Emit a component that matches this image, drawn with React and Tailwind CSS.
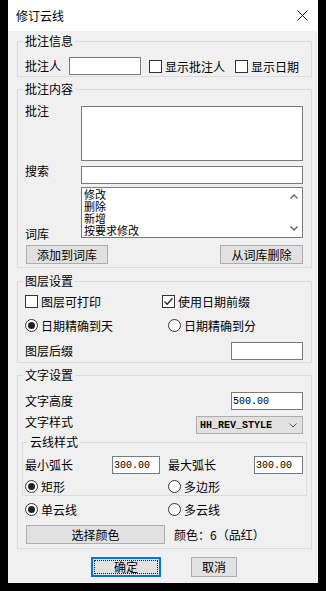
import React from 'react';

const cjk = "font-['Noto_Sans_CJK_SC','Noto_Sans_CJK_JP',sans-serif]";

function Group({ title, className = '', children }) {
    return (
        <fieldset className={`border border-[#dcdcdc] ${className}`}>
            <legend className="ml-[5px] px-[2px] text-[12px] leading-[16px]">{title}</legend>
            {children}
        </fieldset>
    );
}

function Input({ className = '', value }) {
    return (
        <div className={`bg-white border border-[#7a7a7a] h-[18px] pl-[1px] flex items-center font-['Liberation_Mono',monospace] text-[10px] ${className}`}>
            {value}
        </div>
    );
}

function Check({ checked, label }) {
    return (
        <div className="flex items-center h-[13px]">
            <div className="w-[13px] h-[13px] border border-[#333] bg-white flex items-center justify-center">
                {checked && (
                    <svg width="11" height="11" viewBox="0 0 11 11">
                        <path d="M1.5 5.5 L4.2 8.2 L9.5 2.2" fill="none" stroke="#222" strokeWidth="1.3" />
                    </svg>
                )}
            </div>
            <span className="ml-[3px] text-[12px] leading-[13px]">{label}</span>
        </div>
    );
}

function Radio({ checked, label }) {
    return (
        <div className="flex items-center h-[13px]">
            <div className="w-[13px] h-[13px] rounded-full border border-[#333] bg-white flex items-center justify-center">
                {checked && <div className="w-[7px] h-[7px] rounded-full bg-[#222]" />}
            </div>
            <span className="ml-[3px] text-[12px] leading-[13px]">{label}</span>
        </div>
    );
}

function Btn({ className = '', children }) {
    return (
        <div className={`bg-[#e1e1e1] border border-[#adadad] flex items-center justify-center text-[12px] ${className}`}>
            {children}
        </div>
    );
}

export default function App() {
    return (
        <div className={`w-[326px] h-[591px] bg-black pl-[8px] text-black ${cjk}`}>
            <div className="w-[310px] h-[583px] flex flex-col bg-[#f0f0f0]">
                {/* title bar */}
                <div className="h-[31px] bg-white flex items-center justify-between pl-[8px] pr-[10px] shrink-0">
                    <span className="text-[12px]">修订云线</span>
                    <svg width="11" height="11" viewBox="0 0 11 11">
                        <path d="M0.5 0.5 L10.5 10.5 M10.5 0.5 L0.5 10.5" stroke="#111" strokeWidth="1" />
                    </svg>
                </div>

                <div className="pl-[9px] pr-[6px] flex flex-col">
                    {/* 批注信息 */}
                    <Group title="批注信息" className="mt-[2px] h-[44px]">
                        <div className="pl-[7px] pt-[8px] flex items-center h-[26px]">
                            <span className="w-[44px] text-[12px]">批注人</span>
                            <Input className="w-[72px]" />
                            <div className="ml-[8px]"><Check label="显示批注人" /></div>
                            <div className="ml-[10px]"><Check label="显示日期" /></div>
                        </div>
                    </Group>

                    {/* 批注内容 */}
                    <Group title="批注内容" className="mt-[4px] h-[187px]">
                        <div className="pl-[7px] pt-[9px] flex flex-col text-[12px]">
                            <div className="flex items-start">
                                <span className="w-[56px] leading-[16px] -mt-[3px]">批注</span>
                                <div className="w-[222px] h-[55px] bg-white border border-[#7a7a7a]" />
                            </div>
                            <div className="flex items-start mt-[5px]">
                                <span className="w-[56px] leading-[16px] -mt-[3px]">搜索</span>
                                <Input className="w-[222px]" />
                            </div>
                            <div className="flex items-end mt-[3px]">
                                <span className="w-[56px] leading-[16px] -mb-[4px]">词库</span>
                                <div className="w-[222px] h-[51px] bg-white border border-[#7a7a7a] flex">
                                    <div className="flex-1 pl-[2px] text-[11px] leading-[12px]">
                                        <div>修改</div>
                                        <div>删除</div>
                                        <div>新增</div>
                                        <div>按要求修改</div>
                                    </div>
                                    <div className="w-[16px] flex flex-col items-center justify-between py-[6px]">
                                        <svg width="8" height="5" viewBox="0 0 8 5">
                                            <path d="M0.5 4.5 L4 1 L7.5 4.5" fill="none" stroke="#606060" strokeWidth="1.4" />
                                        </svg>
                                        <svg width="8" height="5" viewBox="0 0 8 5">
                                            <path d="M0.5 0.5 L4 4 L7.5 0.5" fill="none" stroke="#606060" strokeWidth="1.4" />
                                        </svg>
                                    </div>
                                </div>
                            </div>
                            <div className="flex justify-between pl-[1px] w-[278px] mt-[7px]">
                                <Btn className="w-[82px] h-[19px]">添加到词库</Btn>
                                <Btn className="w-[83px] h-[19px]">从词库删除</Btn>
                            </div>
                        </div>
                    </Group>

                    {/* 图层设置 */}
                    <Group title="图层设置" className="mt-[5px] h-[90px]">
                        <div className="pl-[7px] pt-[6px] flex flex-col text-[12px]">
                            <div className="flex">
                                <div className="w-[137px]"><Check label="图层可打印" /></div>
                                <Check checked label="使用日期前缀" />
                            </div>
                            <div className="flex mt-[11px]">
                                <div className="w-[143px]"><Radio checked label="日期精确到天" /></div>
                                <Radio label="日期精确到分" />
                            </div>
                            <div className="flex items-center justify-between w-[278px] mt-[10px]">
                                <span>图层后缀</span>
                                <Input className="w-[72px]" />
                            </div>
                        </div>
                    </Group>

                    {/* 文字设置 */}
                    <Group title="文字设置" className="mt-[4px] h-[182px]">
                        <div className="pl-[7px] pt-[9px] flex flex-col text-[12px]">
                            <div className="flex items-center justify-between w-[278px]">
                                <span>文字高度</span>
                                <Input className="w-[72px]" value="500.00" />
                            </div>
                            <div className="flex items-start justify-between w-[278px] mt-[6px]">
                                <span className="leading-[16px] -mt-[2px]">文字样式</span>
                                <div className="w-[107px] h-[18px] bg-[#e1e1e1] border border-[#adadad] flex items-center justify-between pl-[3px] pr-[5px]">
                                    <span className="font-['Liberation_Mono',monospace] text-[10px] font-bold">HH_REV_STYLE</span>
                                    <svg width="8" height="5" viewBox="0 0 8 5">
                                        <path d="M0.5 0.5 L4 4 L7.5 0.5" fill="none" stroke="#555" strokeWidth="1" />
                                    </svg>
                                </div>
                            </div>
                            <Group title="云线样式" className="-ml-[3px] w-[285px] h-[62px]">
                                <div className="pl-[2px] pt-[6px] flex flex-col">
                                    <div className="flex items-center">
                                        <span className="w-[87px]">最小弧长</span>
                                        <Input className="w-[48px]" value="300.00" />
                                        <span className="ml-[8px] w-[86px]">最大弧长</span>
                                        <Input className="w-[49px]" value="300.00" />
                                    </div>
                                    <div className="flex mt-[6px]">
                                        <div className="w-[143px]"><Radio checked label="矩形" /></div>
                                        <Radio label="多边形" />
                                    </div>
                                </div>
                            </Group>
                            <div className="flex mt-[7px]">
                                <div className="w-[143px]"><Radio checked label="单云线" /></div>
                                <Radio label="多云线" />
                            </div>
                            <div className="flex items-center mt-[9px]">
                                <Btn className="ml-[1px] w-[139px] h-[19px]">选择颜色</Btn>
                                <span className="ml-[9px]">颜色：6（品红）</span>
                            </div>
                        </div>
                    </Group>

                    {/* buttons */}
                    <div className="flex mt-[8px] text-[12px]">
                        <div className="ml-[74px] w-[70px] h-[20px] border-2 border-[#0078d7] bg-[#e1e1e1] p-[1px]">
                            <div className="w-full h-full border border-dotted border-[#222] flex items-center justify-center">确定</div>
                        </div>
                        <Btn className="ml-[30px] w-[46px] h-[20px]">取消</Btn>
                    </div>
                </div>
            </div>
        </div>
    );
}
